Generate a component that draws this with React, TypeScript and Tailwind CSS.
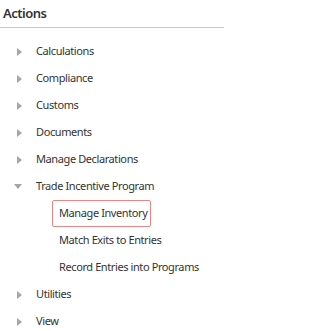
const items = [
  { label: 'Calculations' },
  { label: 'Compliance' },
  { label: 'Customs' },
  { label: 'Documents' },
  { label: 'Manage Declarations' },
  {
    label: 'Trade Incentive Program',
    open: true,
    children: ['Manage Inventory', 'Match Exits to Entries', 'Record Entries into Programs'],
  },
  { label: 'Utilities' },
  { label: 'View' },
];

const Caret = ({ open }: { open?: boolean }) =>
  open ? (
    <svg width="8" height="5" viewBox="0 0 8 5" className="shrink-0">
      <path d="M0 0 L8 0 L4 5 Z" fill="#a6a6a6" />
    </svg>
  ) : (
    <svg width="5" height="8" viewBox="0 0 5 8" className="shrink-0">
      <path d="M0 0 L5 4 L0 8 Z" fill="#a6a6a6" />
    </svg>
  );

export default function App() {
  return (
    <div className="w-[224px] h-[331px] bg-white text-[#333] overflow-hidden font-['Segoe_UI','Noto_Sans',sans-serif]">
      {/* Header */}
      <div className="h-[28px] px-[3px] flex items-center border-b border-[#c6cacf]">
        <h2 className="text-[13px] font-semibold leading-none tracking-[-0.5px]">Actions</h2>
      </div>

      {/* Tree */}
      <ul className="pt-[10px] tracking-[-0.4px]">
        {items.map((item) => (
          <li key={item.label}>
            <div className="h-[27px] flex items-center text-[11px]">
              <span className="w-[36px] flex justify-end pr-[14px]">
                <Caret open={item.open} />
              </span>
              <span>{item.label}</span>
            </div>
            {item.children && (
              <ul>
                {item.children.map((c, i) => (
                  <li key={c} className="h-[27px] flex items-center pl-[52px] text-[11px]">
                    <span
                      className={`h-[27px] flex items-center pl-[6px] pr-[3px] rounded-[2px] border ${
                        i === 0 ? 'border-[#e88686]' : 'border-transparent'
                      }`}
                    >
                      {c}
                    </span>
                  </li>
                ))}
              </ul>
            )}
          </li>
        ))}
      </ul>
    </div>
  );
}
